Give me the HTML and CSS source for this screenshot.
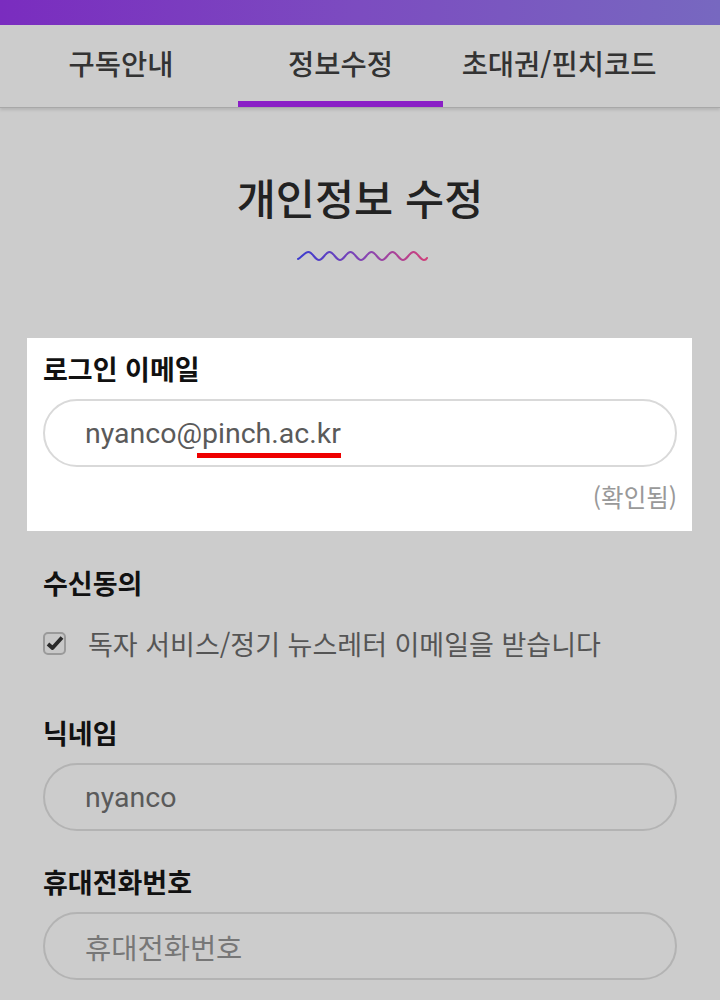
FILE: index.html
```html
<!DOCTYPE html>
<html lang="ko">
<head>
  <meta charset="UTF-8" />
  <meta name="viewport" content="width=device-width, initial-scale=1.0" />
  <title>개인정보 수정</title>
  <link rel="stylesheet" href="styles.css">
</head>
<body>
  <div class="status-bar"></div>

  <nav class="tabs">
    <a class="tab tab-first" href="#">구독안내</a>
    <a class="tab tab-active" href="#">정보수정</a>
    <a class="tab tab-last" href="#">초대권/핀치코드</a>
  </nav>

  <main class="page">
    <h1 class="title">개인정보 수정</h1>
    <svg class="wave" width="132" height="14" viewBox="0 0 132 14">
      <defs>
        <linearGradient id="wave-grad" x1="0" x2="1" y1="0" y2="0">
          <stop offset="0" stop-color="#3c3ccf" />
          <stop offset="0.55" stop-color="#8a45b0" />
          <stop offset="1" stop-color="#d03f7a" />
        </linearGradient>
      </defs>
      <path d="M2 10 c 3 -1 6.5 -7 10.5 -7 s 6.5 8 10.5 8 s 6.5 -8 10.5 -8 s 6.5 8 10.5 8 s 6.5 -8 10.5 -8 s 6.5 8 10.5 8 s 6.5 -8 10.5 -8 s 6.5 8 10.5 8 s 6.5 -8 10.5 -8 s 6.5 8 10.5 8 s 6.5 -8 10.5 -8 s 6.5 8 10.5 8 c 1.5 0 2.5 -1 3 -2"
            fill="none" stroke="url(#wave-grad)" stroke-width="2" stroke-linecap="round" />
    </svg>

    <form class="form">
      <section class="field field-card">
        <label class="field-label">로그인 이메일</label>
        <div class="input-box input-white">
          <span class="input-text">nyanco@<span class="mark">pinch.ac.kr</span></span>
        </div>
        <p class="field-note">(확인됨)</p>
      </section>

      <section class="field field-agree">
        <label class="field-label">수신동의</label>
        <label class="agree">
          <span class="checkbox">
            <svg width="18" height="16" viewBox="0 0 18 16">
              <path d="M2 9 L6.5 13 L16 2.5" fill="none" stroke="#2a2a2a" stroke-width="3.8" stroke-linejoin="round" />
            </svg>
          </span>
          독자 서비스/정기 뉴스레터 이메일을 받습니다
        </label>
      </section>

      <section class="field">
        <label class="field-label">닉네임</label>
        <div class="input-box">
          <span class="input-text">nyanco</span>
        </div>
      </section>

      <section class="field">
        <label class="field-label">휴대전화번호</label>
        <div class="input-box">
          <span class="input-text placeholder">휴대전화번호</span>
        </div>
      </section>
    </form>
  </main>
</body>
</html>
```

FILE: styles.css
```css
html, body {
  margin: 0;
  padding: 0;
  background: #cccccc;
  font-family: Roboto, "Noto Sans CJK KR", sans-serif;
  color: #222;
}

.status-bar {
  height: 25px;
  background: linear-gradient(90deg, #7a2cbf 0%, #7c4cc0 50%, #7768c0 100%);
}

.tabs {
  display: flex;
  height: 82px;
  background: #cccccc;
  box-shadow: 0 1px 0 #a8a8a8, 0 3px 3px rgba(0, 0, 0, 0.12);
  position: relative;
}

.tab {
  display: flex;
  align-items: center;
  justify-content: center;
  box-sizing: border-box;
  padding-bottom: 2px;
  font-family: "Noto Sans CJK KR", sans-serif;
  font-size: 28.5px;
  font-weight: 500;
  color: #333;
  text-decoration: none;
  border-bottom: 6px solid transparent;
}

.tab-first {
  width: 242px;
}

.tab-active {
  width: 205px;
  margin-left: -4px;
  border-bottom-color: #8a1ec6;
}

.tab-last {
  width: 232px;
}

.page {
  display: flex;
  flex-direction: column;
  align-items: center;
}

.title {
  margin: 62px 0 0;
  font-family: "Noto Sans CJK KR", sans-serif;
  font-size: 42.5px;
  font-weight: 500;
  line-height: 56px;
  color: #222;
}

.wave {
  display: block;
  margin: 24px 0 0 4px;
}

.form {
  width: 665px;
  margin: 75px 0 0 27px;
  align-self: flex-start;
}

.field {
  padding: 0 15px 0 16px;
  margin-bottom: 33px;
}

.field-card {
  background: #fff;
  padding-top: 13px;
  padding-bottom: 18px;
  margin-bottom: 34px;
}

.field-agree {
  margin-bottom: 54px;
}

.field-label {
  display: block;
  font-family: "Noto Sans CJK KR", sans-serif;
  font-size: 27px;
  font-weight: 700;
  line-height: 36px;
  color: #111;
  margin-bottom: 12px;
}

.input-box {
  height: 68px;
  box-sizing: border-box;
  border: 2px solid #b3b3b3;
  border-radius: 34px;
  display: flex;
  align-items: center;
  padding-left: 40px;
}

.input-white {
  background: #fff;
  border-color: #d9d9d9;
}

.input-text {
  font-family: Roboto, "Noto Sans CJK KR", sans-serif;
  font-size: 28.5px;
  color: #5a5a5a;
  position: relative;
}

.placeholder {
  color: #777;
}

.mark {
  position: relative;
}

.mark::after {
  content: "";
  position: absolute;
  left: -5px;
  right: 0;
  bottom: -8px;
  height: 5px;
  background: #ee0000;
}

.field-note {
  margin: 14px 0 0;
  text-align: right;
  font-family: "Noto Sans CJK KR", sans-serif;
  font-size: 24.5px;
  line-height: 32px;
  color: #999;
}

.agree {
  display: flex;
  align-items: center;
  height: 36px;
  gap: 22px;
  font-family: "Noto Sans CJK KR", sans-serif;
  font-size: 27px;
  color: #555;
  margin-top: 24px;
}

.checkbox {
  width: 23px;
  height: 23px;
  box-sizing: border-box;
  border: 2px solid #9a9a9a;
  border-radius: 5px;
  background: #c8c8c8;
  display: flex;
  align-items: center;
  justify-content: center;
}
```
